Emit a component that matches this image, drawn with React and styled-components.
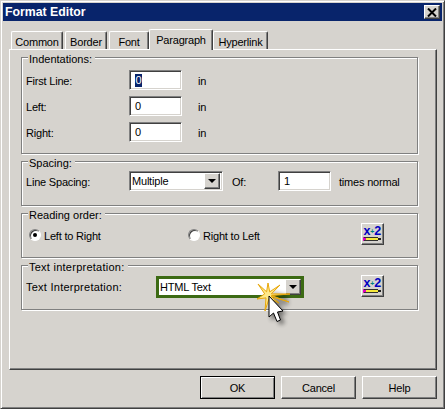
import React from "react";
import styled, { createGlobalStyle } from "styled-components";

const Global = createGlobalStyle`
  html, body { margin: 0; padding: 0; background: #d6d3ce; }
  * { box-sizing: border-box; }
  body { font-family: "Liberation Sans", Arial, sans-serif; font-size: 11px; color: #000; letter-spacing: -0.2px; }
`;

const Dialog = styled.div`
  position: relative;
  width: 445px;
  height: 409px;
  background: #d6d3ce;
  padding: 2px;
  border: 1px solid;
  border-color: #d6d3ce #404040 #404040 #d6d3ce;
  box-shadow: inset 1px 1px 0 #fff, inset -1px -1px 0 #808080;
  display: flex;
  flex-direction: column;
  overflow: hidden;
`;
const TitleBar = styled.div`
  height: 18px;
  background: #08246b;
  color: #fff;
  font-weight: 700;
  font-size: 12.3px;
  letter-spacing: 0;
  display: flex;
  align-items: center;
  justify-content: space-between;
  padding: 0 2px 0 2px;
  line-height: 1;
`;
const Raised = styled.button`
  appearance: none;
  padding: 0;
  margin: 0;
  font: inherit;
  letter-spacing: inherit;
  color: #000;
  background: #d6d3ce;
  border: 1px solid;
  border-color: #fff #404040 #404040 #fff;
  box-shadow: inset -1px -1px 0 #808080;
  display: flex;
  align-items: center;
  justify-content: center;
`;
const CloseButton = styled(Raised)`
  width: 16px;
  height: 14px;
`;
const Body = styled.div`
  margin: 8px 6px 0 6px;
  display: flex;
  flex-direction: column;
`;
const TabRow = styled.div`
  display: flex;
  align-items: flex-end;
  height: 20px;
  padding-left: 2px;
  position: relative;
  z-index: 1;
`;
const Tab = styled.div`
  width: ${p => p.$w}px;
  margin-right: ${p => p.$mr ?? 2}px;
  margin-bottom: ${p => (p.$active ? -1 : 0)}px;
  height: ${p => (p.$active ? 21 : 18)}px;
  background: #d6d3ce;
  border-top: 1px solid #fff;
  border-left: 1px solid #fff;
  border-right: 1px solid #404040;
  box-shadow: inset -1px 0 0 #808080;
  border-radius: 2px 2px 0 0;
  display: flex;
  justify-content: center;
  padding-top: 3px;
  line-height: 14px;
`;
const Panel = styled.div`
  height: 321px;
  width: 428px;
  border: 1px solid;
  border-color: #fff #404040 #404040 #fff;
  box-shadow: inset -1px -1px 0 #808080;
  padding: 7px 0 0 11px;
  display: flex;
  flex-direction: column;
  gap: 7px;
`;
const Group = styled.div`
  position: relative;
  width: 397px;
  height: ${p => p.$h}px;
  border: 1px solid #808080;
  box-shadow: 1px 1px 0 #fff, inset 1px 1px 0 #fff;
  padding: ${p => p.$pt ?? 9}px 4px 0 4px;
  display: flex;
  flex-direction: column;
  gap: 6px;
`;
const Legend = styled.span`
  position: absolute;
  left: 6px;
  top: -6px;
  background: #d6d3ce;
  padding: 0 3px 0 1px;
  line-height: 14px;
  letter-spacing: ${p => p.$ls ?? 0}px;
`;
const Row = styled.div`
  display: flex;
  align-items: center;
  height: ${p => p.$h ?? 20}px;
`;
const Label = styled.span`
  width: ${p => p.$w}px;
  margin-left: ${p => p.$ml ?? 0}px;
  padding-top: ${p => p.$pt ?? 1}px;
  flex: none;
  white-space: nowrap;
  ${p => (p.$ls !== undefined ? `letter-spacing: ${p.$ls}px;` : "")}
`;
const Field = styled.div`
  width: 53px;
  height: 20px;
  flex: none;
  background: #fff;
  border: 1px solid;
  border-color: #808080 #fff #fff #808080;
  box-shadow: inset 1px 1px 0 #404040, inset -1px -1px 0 #d6d3ce;
  padding: 3px 0 0 5px;
  line-height: 13px;
`;
const Selected = styled.span`
  display: inline-block;
  background: #08246b;
  color: #fff;
  height: 13px;
  line-height: 13px;
  padding: 0 0.5px;
`;
const Select = styled.div`
  width: ${p => p.$w}px;
  height: ${p => p.$h}px;
  flex: none;
  margin-top: ${p => p.$mt ?? 0}px;
  background: #fff;
  display: flex;
  align-items: center;
  justify-content: space-between;
  border: ${p => (p.$highlight ? "3px solid #3c6a14" : "1px solid")};
  border-color: ${p => (p.$highlight ? "#3c6a14" : "#808080 #fff #fff #808080")};
  ${p => (p.$highlight ? "" : "box-shadow: inset 1px 1px 0 #404040, inset -1px -1px 0 #d6d3ce;")}
  padding: ${p => (p.$highlight ? "0 0 0 1px" : "2px")};
`;
const Arrow = styled(Raised)`
  width: 16px;
  height: 16px;
  flex: none;
  &::after {
    content: "";
    border-left: 4px solid transparent;
    border-right: 4px solid transparent;
    border-top: 4px solid #000;
  }
`;
const RadioDot = styled.span`
  width: 12px;
  height: 12px;
  flex: none;
  border-radius: 50%;
  background: #fff;
  border: 1px solid;
  border-color: #808080 #fff #fff #808080;
  box-shadow: inset 1px 1px 0 #404040;
  display: flex;
  align-items: center;
  justify-content: center;
  margin: 2px 3px 0 ${p => p.$ml ?? 0}px;
  &::after {
    content: "";
    width: 4px;
    height: 4px;
    border-radius: 50%;
    background: ${p => (p.$on ? "#000" : "transparent")};
  }
`;
const IconBtn = styled(Raised)`
  width: 23px;
  height: 22px;
  flex: none;
  margin-left: ${p => p.$ml}px;
  margin-top: ${p => p.$mt ?? 0}px;
`;
const Footer = styled.div`
  margin-top: 6px;
  display: flex;
  justify-content: flex-end;
  gap: 6px;
  width: 428px;
`;
const Btn = styled(Raised)`
  width: 75px;
  height: 23px;
  ${p => (p.$def ? "border-color:#000; box-shadow: inset 1px 1px 0 #fff, inset -1px -1px 0 #808080;" : "")}
`;
const Overlay = styled.svg`
  position: absolute;
  left: 240px;
  top: 270px;
  pointer-events: none;
`;

const Formula = () => (
  <svg width="19" height="18" viewBox="0 0 19 18">
    <text x="0.5" y="10" fontFamily="'Liberation Sans', sans-serif" fontWeight="700" fontSize="12.5" fill="#0000c0">
      x<tspan fontSize="7" dy="-1" fill="#008080">+</tspan><tspan dy="1">2</tspan>
    </text>
    <rect x="0" y="12" width="3" height="4" fill="#e000c0" />
    <rect x="3" y="12" width="12" height="4" fill="#f6e83a" />
    <rect x="1" y="12" width="14" height="1" fill="#303030" />
    <rect x="1" y="15" width="14" height="1" fill="#303030" />
    <rect x="15" y="13" width="3" height="2" fill="#202020" />
  </svg>
);

const tips = [[27, 12], [39, 14], [49, 23], [48, 31], [38, 32], [24, 40], [16, 28], [17, 13]];
const cx = 27, cy = 24;
const starPath = tips.map((t, i) => {
  const n = tips[(i + 1) % tips.length];
  const mx = (t[0] + n[0]) / 2, my = (t[1] + n[1]) / 2;
  const d = Math.hypot(mx - cx, my - cy) || 1;
  const ix = cx + ((mx - cx) / d) * 3.5, iy = cy + ((my - cy) / d) * 3.5;
  return `${i ? "L" : "M"}${t[0]} ${t[1]} L${ix.toFixed(1)} ${iy.toFixed(1)}`;
}).join(" ") + " Z";

export default function App() {
  return (
    <Dialog>
      <Global />
      <TitleBar>
        <span>Format Editor</span>
        <CloseButton aria-label="Close">
          <svg width="10" height="9" viewBox="0 0 10 9"><path d="M1 0.5 L9 8.5 M9 0.5 L1 8.5" stroke="#000" strokeWidth="2" /></svg>
        </CloseButton>
      </TitleBar>
      <Body>
        <TabRow>
          <Tab $w={52}>Common</Tab>
          <Tab $w={42}>Border</Tab>
          <Tab $w={40} $mr={0}>Font</Tab>
          <Tab $w={64} $active $mr={0}>Paragraph</Tab>
          <Tab $w={55}>Hyperlink</Tab>
        </TabRow>
        <Panel>
          <Group $h={97} $pt={12}>
            <Legend>Indentations:</Legend>
            <Row>
              <Label $w={103}>First Line:</Label>
              <Field><Selected>0</Selected></Field>
              <Label $w={20} $ml={16}>in</Label>
            </Row>
            <Row>
              <Label $w={103}>Left:</Label>
              <Field>0</Field>
              <Label $w={20} $ml={16}>in</Label>
            </Row>
            <Row>
              <Label $w={103}>Right:</Label>
              <Field>0</Field>
              <Label $w={20} $ml={16}>in</Label>
            </Row>
          </Group>
          <Group $h={45}>
            <Legend>Spacing:</Legend>
            <Row>
              <Label $w={103}>Line Spacing:</Label>
              <Select $w={94} $h={20}>Multiple<Arrow /></Select>
              <Label $w={46} $ml={9}>Of:</Label>
              <Field>1</Field>
              <Label $w={60} $ml={8}>times normal</Label>
            </Row>
          </Group>
          <Group $h={45}>
            <Legend>Reading order:</Legend>
            <Row $h={22}>
              <RadioDot $on $ml={3} />
              <Label $w={144} $pt={4}>Left to Right</Label>
              <RadioDot />
              <Label $w={100} $pt={4}>Right to Left</Label>
              <IconBtn $ml={58}><Formula /></IconBtn>
            </Row>
          </Group>
          <Group $h={45}>
            <Legend $ls={0.25}>Text interpretation:</Legend>
            <Row $h={22}>
              <Label $w={130} $ls={0.25} $pt={2}>Text Interpretation:</Label>
              <Select $w={148} $h={22} $mt={2} $highlight>HTML Text<Arrow /></Select>
              <IconBtn $ml={57}><Formula /></IconBtn>
            </Row>
          </Group>
        </Panel>
        <Footer>
          <Btn $def>OK</Btn>
          <Btn>Cancel</Btn>
          <Btn>Help</Btn>
        </Footer>
      </Body>
      <Overlay width="60" height="60" viewBox="0 0 60 60">
        <defs>
          <filter id="sh" x="-40%" y="-40%" width="200%" height="200%">
            <feGaussianBlur stdDeviation="2" />
          </filter>
        </defs>
        <path d="M30 20 L46 24 L48 34 L34 36 Z" fill="#000" opacity="0.3" filter="url(#sh)" />
        <path d={starPath} fill="#ffe98a" stroke="#e8a70a" strokeWidth="1" strokeLinejoin="miter" />
        <path d="M30 28 L30 50 L35 46 L39 54 L44 52 L40 44 L46 43 Z" fill="#000" opacity="0.45" filter="url(#sh)" />
        <path d="M28 25 L28 46 L32.5 42 L36 50.5 L39.5 49 L36.5 41 L42 40 Z" fill="#fff" stroke="#000" strokeWidth="1" strokeLinejoin="round" />
      </Overlay>
    </Dialog>
  );
}
